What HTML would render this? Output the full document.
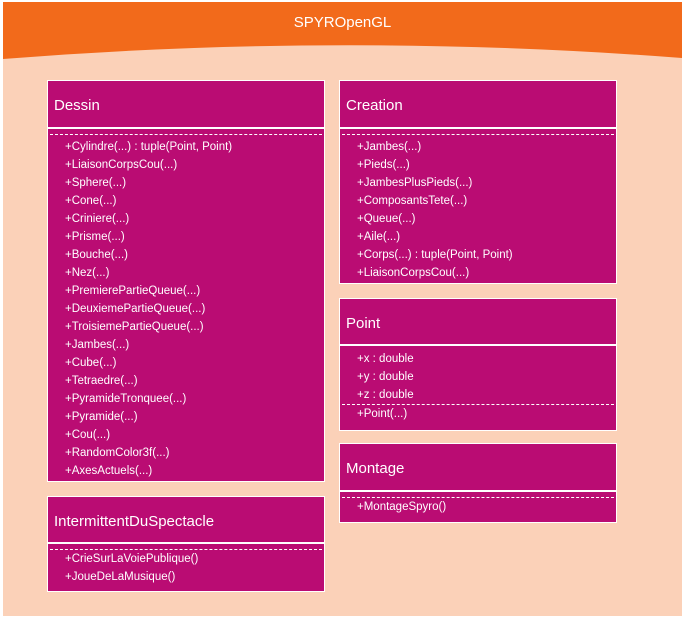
<!DOCTYPE html><html><head><style>
body{margin:0;width:686px;height:620px;background:#fff;position:relative;font-family:"Liberation Sans",sans-serif;overflow:hidden}
.bg{position:absolute;left:3px;top:2px;width:679px;height:614px;background:#FBD1B8}
.hdr{position:absolute;left:3px;top:2px}
.title{position:absolute;left:3px;width:679px;top:14px;text-align:center;color:#fff;font-size:15px}
.box{position:absolute;background:#fff;padding:1px}
.h{background:#BA0C73;color:#fff;font-size:15px;padding-left:6px;box-sizing:border-box}
.b{background:#BA0C73;color:#fff;font-size:11.5px;margin-top:2px;box-sizing:border-box;padding-left:17px;line-height:18px;position:relative}
.d{border-top:1px dashed #fff;margin-left:-15px;margin-right:2px}
</style></head><body>
<div class="bg"></div>
<svg class="hdr" width="679" height="60"><path d="M0 0H679V56Q340 30 0 57Z" fill="#F26A1B"/></svg>
<div class="title">SPYROpenGL</div>

<div class="box" style="left:47px;top:80px;width:276px">
<div class="h" style="height:46px;line-height:49px">Dessin</div>
<div class="b" style="height:352px;padding-top:5px"><div class="d" style="margin-bottom:3px"></div>
+Cylindre(...) : tuple(Point, Point)<br>+LiaisonCorpsCou(...)<br>+Sphere(...)<br>+Cone(...)<br>+Criniere(...)<br>+Prisme(...)<br>+Bouche(...)<br>+Nez(...)<br>+PremierePartieQueue(...)<br>+DeuxiemePartieQueue(...)<br>+TroisiemePartieQueue(...)<br>+Jambes(...)<br>+Cube(...)<br>+Tetraedre(...)<br>+PyramideTronquee(...)<br>+Pyramide(...)<br>+Cou(...)<br>+RandomColor3f(...)<br>+AxesActuels(...)</div></div>

<div class="box" style="left:339px;top:80px;width:276px">
<div class="h" style="height:46px;line-height:49px">Creation</div>
<div class="b" style="height:154px;padding-top:5px"><div class="d" style="margin-bottom:3px"></div>
+Jambes(...)<br>+Pieds(...)<br>+JambesPlusPieds(...)<br>+ComposantsTete(...)<br>+Queue(...)<br>+Aile(...)<br>+Corps(...) : tuple(Point, Point)<br>+LiaisonCorpsCou(...)</div></div>

<div class="box" style="left:339px;top:298px;width:276px">
<div class="h" style="height:45px;line-height:49px">Point</div>
<div class="b" style="height:84px;padding-top:4px">+x : double<br>+y : double<br>+z : double<div class="d"></div>+Point(...)</div></div>

<div class="box" style="left:339px;top:443px;width:276px">
<div class="h" style="height:46px;line-height:49px">Montage</div>
<div class="b" style="height:30px;padding-top:5px"><div class="d" style="margin-bottom:0"></div>+MontageSpyro()</div></div>

<div class="box" style="left:47px;top:496px;width:276px">
<div class="h" style="height:45px;line-height:49px">IntermittentDuSpectacle</div>
<div class="b" style="height:47px;padding-top:5px"><div class="d" style="margin-bottom:0"></div>+CrieSurLaVoiePublique()<br>+JoueDeLaMusique()</div></div>
</body></html>
